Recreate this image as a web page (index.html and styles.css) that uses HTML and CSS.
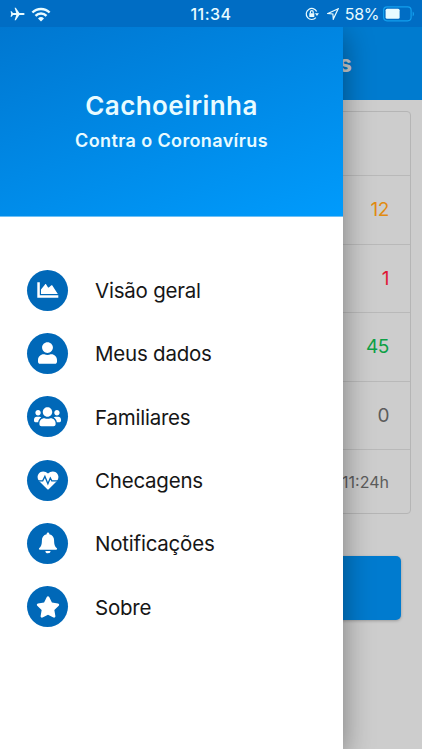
FILE: index.html
```html
<!DOCTYPE html>
<html lang="pt-BR">
  <head>
    <meta charset="UTF-8" />
    <meta name="viewport" content="width=device-width, initial-scale=1" />
    <title>Cachoeirinha Contra o Coronavírus</title>
    <link rel="stylesheet" href="styles.css">
  </head>
  <body>
    <div class="app">
      <header class="status-bar">
        <div class="status-left">
          <svg class="plane" viewBox="0 0 16 14"><path d="M15.6 7c0-.7-.8-1-1.8-1H10L6.2.4H4.9L6.7 6H3.2L1.7 4H.6l.7 3-.7 3h1.1l1.5-2h3.5l-1.8 5.6h1.3L10 8h3.8c1 0 1.8-.3 1.8-1z"/></svg>
          <svg class="wifi" viewBox="0 0 20 15"><path class="arc" d="M1.4 5.5a12.3 12.3 0 0 1 17.2 0M4.5 8.8a7.8 7.8 0 0 1 11 0"/><path d="M10 14.6l-3-3.1a4.3 4.3 0 0 1 6 0z"/></svg>
        </div>
        <span class="clock">11:34</span>
        <div class="status-right">
          <svg class="lock" viewBox="0 0 14 14"><path class="line" d="M10.9 10.6A5.500 5.500 0 1 1 11.700 4.600"/><path d="M9.900 6.300h4l-1.900 2.700zM4.300 6.300h5v3.700h-5z"/><path class="line" d="M5.400 6.500V5.100a1.400 1.400 0 0 1 2.800 0v1.400"/></svg>
          <svg class="arrow" viewBox="0 0 12 12"><path class="line" d="M11.2.8L.9 5.5l5 .5.4 5.1z"/></svg>
          <span class="percent">58%</span>
          <svg class="battery" viewBox="0 0 32 16"><rect class="shell" x=".6" y=".8" width="27.5" height="14" rx="3.5"/><rect x="2.6" y="2.8" width="14" height="10" rx="1.5"/><path class="tip" d="M29.7 5.4c1.7.7 1.7 4.1 0 4.8z"/></svg>
        </div>
      </header>

      <main class="page">
        <div class="toolbar"><span>s</span></div>
        <div class="card">
          <div class="item"></div>
          <div class="item warning">12</div>
          <div class="item danger">1</div>
          <div class="item success">45</div>
          <div class="item">0</div>
          <div class="item updated">11:24h</div>
        </div>
        <button class="action" aria-label="Abrir"></button>
      </main>

      <nav class="drawer">
        <div class="drawer-header">
          <h1>Cachoeirinha</h1>
          <h2>Contra o Coronavírus</h2>
        </div>
        <ul class="menu">
          <li>
            <span class="icon"><svg width="22" height="16" viewBox="0 0 22 16"><path d="M.3.300h2.500v13h18.500v2.400H.3z"/><path d="M4 12V7.400L8 2.400c.4-.5.8-.5 1.200 0l1.700 2.800c.3.500.8.500 1.200.1l2-1.700c.5-.4 1-.3 1.400.2L20.800 12z"/></svg></span>
            <span>Visão geral</span>
          </li>
          <li>
            <span class="icon"><svg width="19" height="22" viewBox="0 0 448 512"><path d="M224 256c70.7 0 128-57.3 128-128S294.700 0 224 0 96 57.300 96 128s57.300 128 128 128zm89.600 32h-16.700c-22.200 10.200-46.900 16-72.900 16s-50.600-5.800-72.900-16h-16.700C60.200 288 0 348.200 0 422.400V464c0 26.500 21.500 48 48 48h352c26.500 0 48-21.500 48-48v-41.600c0-74.200-60.200-134.400-134.400-134.400z"/></svg></span>
            <span>Meus dados</span>
          </li>
          <li>
            <span class="icon"><svg width="27" height="21.6" viewBox="0 0 640 512"><path d="M96 224c35.3 0 64-28.7 64-64s-28.7-64-64-64-64 28.7-64 64 28.7 64 64 64zm448 0c35.3 0 64-28.7 64-64s-28.7-64-64-64-64 28.7-64 64 28.7 64 64 64zm32 32h-64c-17.6 0-33.5 7.1-45.1 18.6 40.3 22.1 68.9 62 75.1 109.4h66c17.7 0 32-14.3 32-32v-32c0-35.3-28.7-64-64-64zm-256 0c61.9 0 112-50.1 112-112S381.9 32 320 32 208 82.1 208 144s50.1 112 112 112zm76.8 32h-8.3c-20.8 10-43.9 16-68.5 16s-47.6-6-68.5-16h-8.3C179.6 288 128 339.6 128 403.2V432c0 26.5 21.5 48 48 48h288c26.5 0 48-21.5 48-48v-28.8c0-63.6-51.6-115.2-115.2-115.2zm-223.7-13.4C161.5 263.1 145.6 256 128 256H64c-35.3 0-64 28.7-64 64v32c0 17.7 14.3 32 32 32h65.9c6.3-47.4 34.9-87.3 75.2-109.4z"/></svg></span>
            <span>Familiares</span>
          </li>
          <li>
            <span class="icon"><svg width="22" height="19" viewBox="0 0 22 19"><path d="M11 2.600C8.800.100 5.500-.1 3.200 1.200.2 3.300-.3 7 2 9.900L10.300 18.300c.4.400 1 .4 1.400 0L20 9.900c2.300-2.900 1.800-6.600-1.200-8.700C16.500-.1 13.200.1 11 2.600z"/><path class="pulse" d="M0 9.900h5.700L7.900 5.400l3 7.300 2.400-5.700 1.500 2.900H22"/></svg></span>
            <span>Checagens</span>
          </li>
          <li>
            <span class="icon"><svg width="20" height="22" viewBox="0 0 20 22"><path d="M10 .4c-.8 0-1.3.6-1.3 1.300v.5C5.500 2.800 3.900 5.300 3.900 8.500c0 4.600-1.100 6.300-2.500 7.500-.9.800-.5 1.700.6 1.700h16c1.100 0 1.500-.9.600-1.700-1.400-1.200-2.500-2.900-2.500-7.500 0-3.200-1.600-5.700-4.800-6.300v-.5C11.300 1 10.800.4 10 .4zM7.400 18.900a2.600 2.300 0 0 0 5.200 0z"/></svg></span>
            <span>Notificações</span>
          </li>
          <li>
            <span class="icon"><svg width="24" height="22" viewBox="0 0 576 512"><path d="M259.300 17.800L194 150.200 47.900 171.500c-26.200 3.800-36.700 36.100-17.700 54.600l105.700 103-25 145.500c-4.500 26.300 23.200 46 46.400 33.700L288 439.600l130.700 68.700c23.200 12.200 50.900-7.400 46.400-33.700l-25-145.500 105.700-103c19-18.500 8.500-50.800-17.700-54.600L382 150.200 316.700 17.800c-11.700-23.600-45.600-23.900-57.400 0z"/></svg></span>
            <span>Sobre</span>
          </li>
        </ul>
      </nav>
    </div>
  </body>
</html>
```

FILE: styles.css
```css
* {
  box-sizing: border-box;
}

body {
  margin: 0;
  background: #fff;
  font-family: Inter, "Liberation Sans", sans-serif;
}

.app {
  position: relative;
  width: 422px;
  height: 749px;
  overflow: hidden;
  background: #cdcdcd;
}

svg {
  display: block;
  fill: #fff;
}

/* status bar */
.status-bar {
  display: grid;
  grid-template-columns: 1fr auto 1fr;
  align-items: center;
  height: 27px;
  padding: 1px 7px 0 7px;
  background: #006dc4;
  color: #e8fbff;
  font-size: 16px;
}

.status-left,
.status-right {
  display: flex;
  align-items: center;
}

.status-left {
  padding-left: 3px;
}

.status-right {
  justify-content: flex-end;
}

.status-bar svg {
  fill: #e8fbff;
}

.plane {
  width: 15px;
  height: 14px;
}

.wifi {
  width: 20px;
  height: 15px;
  margin-left: 6px;
}

.wifi .arc {
  fill: none;
  stroke: #e8fbff;
  stroke-width: 2.4;
}

.clock {
  font-weight: 500;
  letter-spacing: 0.5px;
}

.percent {
  letter-spacing: -0.4px;
}

.lock {
  width: 14px;
  height: 14px;
}

.arrow {
  width: 12px;
  height: 12px;
  margin: 0 6px 0 8px;
}

.status-bar .line {
  fill: none;
  stroke: #e8fbff;
  stroke-width: 1.2;
}

.battery {
  width: 32px;
  height: 16px;
  margin-left: 4px;
}

.status-bar .shell {
  fill: none;
  stroke: #12a0ee;
  stroke-width: 1.2;
}

.status-bar .tip {
  fill: #12a0ee;
}

/* page behind the menu */
.toolbar {
  display: flex;
  align-items: center;
  justify-content: flex-end;
  height: 73px;
  padding-right: 70px;
  background: #007bcf;
  color: #cdcdcd;
  font-size: 23px;
  font-weight: 700;
}

.card {
  margin: 11px 11px 0;
  border: 1px solid #b5b5b5;
  border-radius: 4px;
}

.item {
  display: flex;
  align-items: center;
  justify-content: flex-end;
  height: 68.5px;
  padding-right: 21px;
  border-bottom: 1px solid #b9b9b9;
  color: #5c5c5c;
  font-size: 19px;
  letter-spacing: -0.4px;
}

.item:first-child {
  height: 64px;
}

.item:last-child {
  height: 63px;
  border-bottom: 0;
}

.warning {
  color: #e18b12;
}

.danger {
  color: #df1735;
}

.success {
  color: #0da046;
}

.updated {
  font-size: 16px;
  letter-spacing: 0;
}

.action {
  display: block;
  width: 380px;
  height: 64px;
  margin: 42px 21px 0;
  border: 0;
  border-radius: 5px;
  background: #007bcf;
  box-shadow: 0 1px 3px rgba(0, 0, 0, 0.25);
}

/* side menu */
.drawer {
  position: absolute;
  top: 27px;
  bottom: 0;
  left: 0;
  width: 343px;
  background: #fff;
  box-shadow: 0 8px 28px rgba(0, 0, 0, 0.4);
  clip-path: inset(0 -60px 0 0);
}

.drawer-header {
  height: 190px;
  padding-top: 63px;
  background: linear-gradient(160deg, #0077d0, #009bfc);
  border-bottom: 1px solid #6fc0f5;
  color: #e8fbff;
  text-align: center;
}

h1 {
  margin: 0;
  font-size: 26px;
  line-height: 32px;
  font-weight: 600;
  letter-spacing: 0.45px;
}

h2 {
  margin: 8px 0 0;
  font-size: 18px;
  line-height: 22px;
  font-weight: 600;
  letter-spacing: 0.38px;
}

.menu {
  margin: 0;
  padding: 41.5px 0 0 27px;
  list-style: none;
}

.menu li {
  display: flex;
  align-items: center;
  gap: 27px;
  height: 63.3px;
  color: #161616;
  font-size: 20.5px;
  letter-spacing: -0.22px;
}

.menu li span:last-child {
  padding-top: 1px;
}

.icon {
  display: flex;
  align-items: center;
  justify-content: center;
  width: 41px;
  height: 41px;
  border-radius: 50%;
  background: #0068b8;
}

.pulse {
  fill: none;
  stroke: #0068b8;
  stroke-width: 1.3;
}
```
